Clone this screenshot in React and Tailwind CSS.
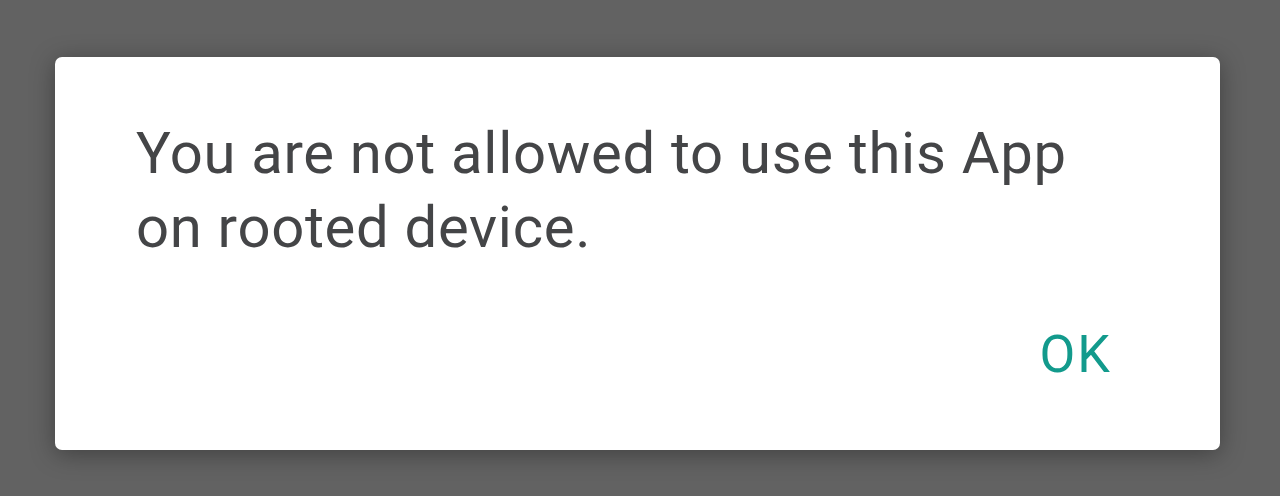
export default function App() {
  return (
    <div className="w-[1280px] h-[496px] bg-[#626262] overflow-hidden pt-[57px] pl-[55px]">
      <div
        className="w-[1165px] h-[393px] bg-white rounded-[7px] shadow-[0_4px_24px_rgba(0,0,0,0.35)] flex flex-col pl-[81px] pr-[110px]"
        style={{ fontFamily: "Roboto, 'Open Sans', sans-serif" }}
      >
        <p className="mt-[59px] text-[58px] leading-[74px] text-[#444547] tracking-[0.7px]">
          You are not allowed to use this App on rooted device.
        </p>
        <div className="flex-1" />
        <div className="flex justify-end pb-[69px]">
          <button className="text-[52px] leading-none text-[#129a8c] tracking-[2px] mr-[-2px]">OK</button>
        </div>
      </div>
    </div>
  );
}
